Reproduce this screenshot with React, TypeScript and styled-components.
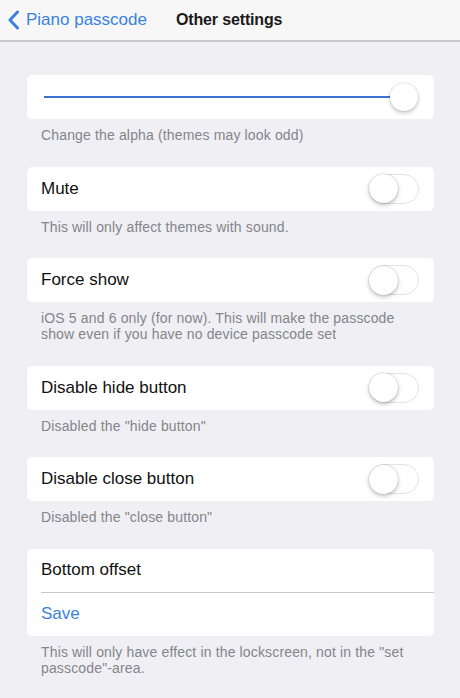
import styled, { createGlobalStyle } from "styled-components";

const GlobalStyle = createGlobalStyle`
  body {
    margin: 0;
    background: #efeff4;
    font-family: "Liberation Sans", Arial, Helvetica, sans-serif;
    -webkit-font-smoothing: antialiased;
  }
`;

const Page = styled.div`
  min-height: 100vh;
  background: #efeff4;
`;

const NavBar = styled.div`
  height: 40px;
  display: flex;
  align-items: center;
  padding-left: 7px;
  background: #f7f7f8;
  border-bottom: 2px solid #c9c9cd;
`;

const BackButton = styled.button`
  display: flex;
  align-items: center;
  gap: 6px;
  padding: 0;
  border: none;
  background: none;
  color: #3a82dc;
  font-family: inherit;
  font-size: 17px;
  cursor: pointer;
`;

const Title = styled.h1`
  margin: 0 0 0 29px;
  font-size: 16px;
  font-weight: 700;
  letter-spacing: -0.15px;
  color: #1a1a1a;
`;

const Content = styled.div`
  padding: 33px 26px 0 27px;
`;

const Group = styled.section`
  margin-bottom: 23.5px;
`;

const Card = styled.div`
  background: #fff;
  border-radius: 5px;
  overflow: hidden;
`;

type rowProps = {
  tall?: boolean;
};

const Row = styled.div<rowProps>`
  height: ${({ tall }) => (tall ? "44px" : "43px")};
  display: flex;
  align-items: center;
  justify-content: space-between;
  padding: 0 15px 0 14px;
`;

const Label = styled.span<{ link?: boolean }>`
  font-size: 17px;
  color: ${({ link }) => (link ? "#3a82dc" : "#111")};
`;

const Separator = styled.div`
  height: 1px;
  margin-left: 14px;
  background: #c8c7cc;
`;

const Caption = styled.p`
  margin: 0;
  padding: 8px 14px 0;
  font-size: 14px;
  line-height: 16px;
  letter-spacing: 0.15px;
  color: #85858a;
`;

const SliderRow = styled.div`
  height: 44px;
  display: flex;
  align-items: center;
  padding: 0 16px 0 17px;
`;

const Track = styled.div`
  flex: 1;
  height: 2px;
  background: #3b70d4;
`;

const Thumb = styled.div`
  width: 28px;
  height: 28px;
  border-radius: 50%;
  background: #fff;
  box-shadow: 0 2px 4px rgba(0, 0, 0, 0.22), 0 0 0 0.5px rgba(0, 0, 0, 0.12);
`;

const Switch = styled.div`
  width: 50px;
  height: 30px;
  box-sizing: border-box;
  display: flex;
  align-items: center;
  border: 1.5px solid #e3e3e7;
  border-radius: 15px;
  background: #fff;
`;

const Knob = styled.div`
  width: 29px;
  height: 29px;
  margin-left: -1.5px;
  border-radius: 50%;
  background: #fff;
  box-shadow: 0 2px 4px rgba(0, 0, 0, 0.25), 0 0 0 0.5px rgba(0, 0, 0, 0.15);
`;

function Chevron() {
  return (
    <svg width="13" height="20" viewBox="0 0 13 20">
      <path
        d="M10.5 2 L3 10 L10.5 18"
        fill="none"
        stroke="#3a82dc"
        strokeWidth="3"
        strokeLinecap="round"
        strokeLinejoin="round"
      />
    </svg>
  );
}

const toggles = [
  { label: "Mute", note: "This will only affect themes with sound." },
  {
    label: "Force show",
    note: "iOS 5 and 6 only (for now). This will make the passcode show even if you have no device passcode set",
  },
  { label: "Disable hide button", note: 'Disabled the "hide button"' },
  { label: "Disable close button", note: 'Disabled the "close button"' },
];

function App() {
  return (
    <>
      <GlobalStyle />
      <Page>
        <NavBar>
          <BackButton>
            <Chevron />
            Piano passcode
          </BackButton>
          <Title>Other settings</Title>
        </NavBar>
        <Content>
          <Group>
            <Card>
              <SliderRow>
                <Track />
                <Thumb />
              </SliderRow>
            </Card>
            <Caption>Change the alpha (themes may look odd)</Caption>
          </Group>
          {toggles.map((t) => (
            <Group key={t.label}>
              <Card>
                <Row tall>
                  <Label>{t.label}</Label>
                  <Switch>
                    <Knob />
                  </Switch>
                </Row>
              </Card>
              <Caption>{t.note}</Caption>
            </Group>
          ))}
          <Group>
            <Card>
              <Row>
                <Label>Bottom offset</Label>
              </Row>
              <Separator />
              <Row>
                <Label link>Save</Label>
              </Row>
            </Card>
            <Caption>
              This will only have effect in the lockscreen, not in the "set
              passcode"-area.
            </Caption>
          </Group>
        </Content>
      </Page>
    </>
  );
}

export default App;
